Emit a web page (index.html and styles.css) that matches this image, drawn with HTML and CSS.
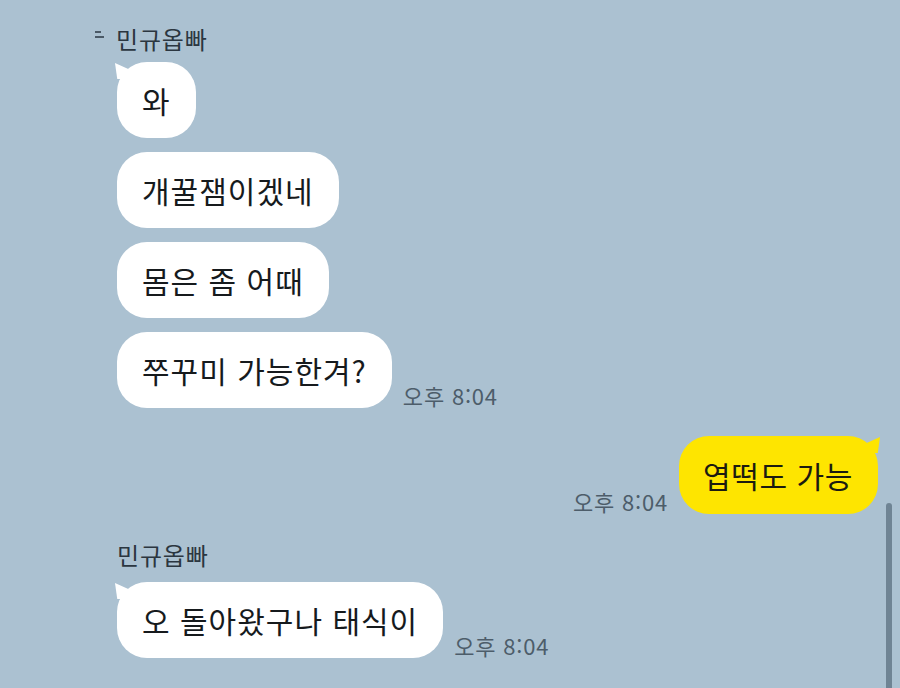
FILE: index.html
```html
<!DOCTYPE html>
<html lang="ko">
<head>
    <meta charset="UTF-8">
    <meta name="viewport" content="width=device-width, initial-scale=1.0">
    <title>민규옵빠</title>
    <link rel="stylesheet" href="styles.css">
</head>
<body>

    <div class="chat">
        <div class="name-row">
            <span class="mark"><i></i><i></i></span>
            <span class="name">민규옵빠</span>
        </div>
        <div class="msg">
            <div class="bubble first">와</div>
        </div>
        <div class="msg">
            <div class="bubble">개꿀잼이겠네</div>
        </div>
        <div class="msg">
            <div class="bubble">몸은 좀 어때</div>
        </div>
        <div class="msg">
            <div class="bubble">쭈꾸미 가능한겨?</div>
            <span class="time">오후 8:04</span>
        </div>

        <div class="msg mine">
            <span class="time">오후 8:04</span>
            <div class="bubble yellow first">엽떡도 가능</div>
        </div>

        <div class="name-row second">
            <span class="name">민규옵빠</span>
        </div>
        <div class="msg">
            <div class="bubble first">오 돌아왔구나 태식이</div>
            <span class="time">오후 8:04</span>
        </div>
    </div>

    <div class="scrollbar"></div>

</body>
</html>
```

FILE: styles.css
```css
body {
    margin: 0;
    height: 688px;
    overflow: hidden;
    background: #abc1d1;
    font-family: "Noto Sans CJK KR", "Noto Sans", sans-serif;
    color: #161a1d;
}

.chat {
    display: flex;
    flex-direction: column;
    padding: 20px 22px 0 117px;
}

.name-row {
    display: flex;
    align-items: center;
    height: 36px;
    margin-bottom: 6px;
}

.name-row.second {
    margin-top: 8px;
    margin-bottom: 10px;
}

.mark {
    display: flex;
    flex-direction: column;
    gap: 3px;
    margin-left: -22px;
    margin-right: 12px;
    margin-top: -8px;
}

.mark i {
    display: block;
    height: 2px;
    width: 6px;
    background: #4a5966;
}

.mark i + i {
    width: 9px;
}

.name {
    font-size: 24px;
    color: #2b3640;
    letter-spacing: 0.8px;
}

.msg {
    display: flex;
    align-items: flex-end;
    gap: 11px;
    margin-bottom: 14px;
}

.msg.mine {
    justify-content: flex-end;
    margin-top: 14px;
}

.bubble {
    position: relative;
    background: #fff;
    border-radius: 30px;
    padding: 19px 25px;
    font-size: 30px;
    line-height: 38px;
    letter-spacing: 1px;
}

/* tail on the first bubble of a group */
.bubble.first::before {
    content: "";
    position: absolute;
    top: 1px;
    left: -2px;
    width: 16px;
    height: 16px;
    background: #fff;
    clip-path: polygon(0 0, 100% 45%, 60% 100%, 14% 100%);
}

.bubble.yellow {
    background: #fee500;
    color: #1c1b10;
    padding: 20px 25px 20px 24px;
    letter-spacing: 0.6px;
}

.bubble.yellow.first::before {
    left: auto;
    right: -2px;
    background: #fee500;
    clip-path: polygon(100% 0, 0 45%, 40% 100%, 86% 100%);
}

.time {
    font-size: 22px;
    color: #4d5d6a;
    line-height: 24px;
    letter-spacing: 0.8px;
    margin-bottom: 1px;
    white-space: nowrap;
}

.scrollbar {
    position: absolute;
    left: 886px;
    top: 503px;
    width: 6px;
    height: 200px;
    border-radius: 3px;
    background: #6f8494;
}
```
